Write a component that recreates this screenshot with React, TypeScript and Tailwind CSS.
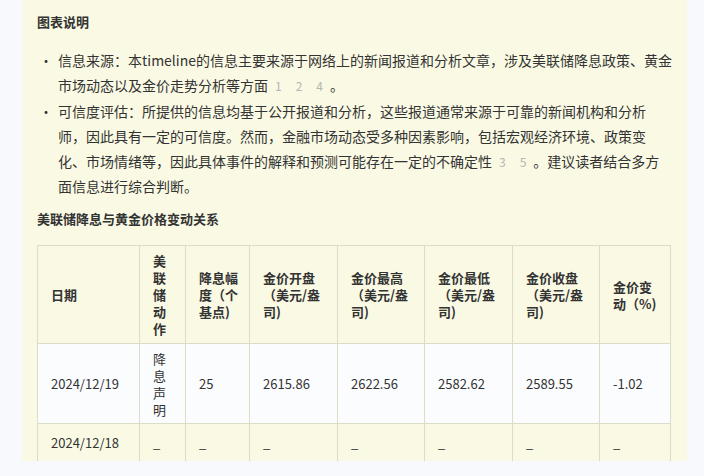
export default function App() {
  const cols = [102, 46, 64, 88, 87, 88, 87, 71];
  const head = ["日期", "美联储动作", "降息幅度（个基点)", "金价开盘（美元/盎司)", "金价最高（美元/盎司)", "金价最低（美元/盎司)", "金价收盘（美元/盎司)", "金价变动（%)"];
  const r1 = ["2024/12/19", "降息声明", "25", "2615.86", "2622.56", "2582.62", "2589.55", "-1.02"];
  const r2 = ["2024/12/18", "_", "_", "_", "_", "_", "_", "_"];
  const Cite = ({ n }: { n: string[] }) => (
    <span className="text-[#b4b4b4] text-[12px]">{n.map((x) => <span key={x} className="mx-[7px]">{x}</span>)}</span>
  );
  return (
    <div className="w-[704px] h-[476px] bg-[#f8f9fc] overflow-hidden text-[#333] text-[14px]" style={{ fontFamily: '"Noto Sans CJK SC", "Noto Sans", sans-serif' }}>
      <div className="ml-[22px] w-[665px] h-[461px] bg-[#fafae4] pl-[15px] pt-[12px] overflow-hidden">
        <div className="font-bold text-[13px] leading-[20px]">图表说明</div>
        <ul className="mt-[16px] pr-[10px]">
          <li className="flex leading-[25px]">
            <span className="w-[21px] shrink-0 pl-[2px]">•</span>
            <span className="whitespace-nowrap">信息来源：本timeline的信息主要来源于网络上的新闻报道和分析文章，涉及美联储降息政策、黄金<br />市场动态以及金价走势分析等方面<Cite n={["1", "2", "4"]} />。</span>
          </li>
          <li className="flex leading-[25px] mt-[1px]">
            <span className="w-[21px] shrink-0 pl-[2px]">•</span>
            <span className="whitespace-nowrap">可信度评估：所提供的信息均基于公开报道和分析，这些报道通常来源于可靠的新闻机构和分析<br />师，因此具有一定的可信度。然而，金融市场动态受多种因素影响，包括宏观经济环境、政策变<br />化、市场情绪等，因此具体事件的解释和预测可能存在一定的不确定性<Cite n={["3", "5"]} />。建议读者结合多方<br />面信息进行综合判断。</span>
          </li>
        </ul>
        <div className="font-bold text-[13px] mt-[10px] leading-[20px]">美联储降息与黄金价格变动关系</div>
        <table className="mt-[16px] border-collapse text-[13px]" style={{ tableLayout: "fixed", width: 633 }}>
          <colgroup>{cols.map((w, i) => <col key={i} style={{ width: w }} />)}</colgroup>
          <tbody>
            <tr className="h-[98px] font-bold">
              {head.map((h, i) => <td key={i} className="border border-[#dcdcc8] pl-[13px] pr-[10px] leading-[17px] align-middle">{h}</td>)}
            </tr>
            <tr className="h-[80px] bg-[#fbfcfe]">
              {r1.map((h, i) => <td key={i} className="border border-[#dcdcc8] pl-[13px] pr-[10px] leading-[17px] align-middle">{h}</td>)}
            </tr>
            <tr className="h-[38px]">
              {r2.map((h, i) => <td key={i} className="border border-[#dcdcc8] pl-[13px] pr-[10px] leading-[17px] align-top pt-[10px]">{h}</td>)}
            </tr>
          </tbody>
        </table>
      </div>
    </div>
  );
}
